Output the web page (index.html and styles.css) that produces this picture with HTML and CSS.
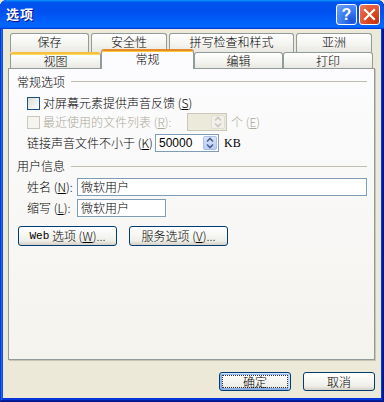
FILE: index.html
```html
<!DOCTYPE html>
<html lang="zh-CN">
<head>
<meta charset="utf-8">
<title>选项</title>
<link rel="stylesheet" href="styles.css">
</head>
<body>
<div class="window">
  <div class="titlebar">
    <span class="title">选项</span>
    <div class="tb-buttons">
      <span class="tb-btn help">?</span>
      <span class="tb-btn close">
        <svg width="13" height="13" viewBox="0 0 13 13"><path d="M2 2 L11 11 M11 2 L2 11" stroke="#fff" stroke-width="2.2" stroke-linecap="square"/></svg>
      </span>
    </div>
  </div>
  <div class="body">
    <div class="tabrow back">
      <div class="tab t-save">保存</div>
      <div class="tab t-sec">安全性</div>
      <div class="tab t-spell">拼写检查和样式</div>
      <div class="tab t-asia">亚洲</div>
    </div>
    <div class="tabrow front">
      <div class="tab hot t-view">视图</div>
      <div class="tab selected t-gen">常规</div>
      <div class="tab t-edit">编辑</div>
      <div class="tab t-print">打印</div>
    </div>
    <div class="panel">
      <div class="section"><span>常规选项</span><i class="rule"></i></div>
      <div class="row cb-row">
        <span class="checkbox"></span>
        <span>对屏幕元素提供声音反馈 (<u>S</u>)</span>
      </div>
      <div class="row cb-row2 disabled">
        <span class="checkbox"></span>
        <span class="recent-label">最近使用的文件列表 (<u>R</u>):</span>
        <span class="spinbox off">
          <span class="spinval"></span>
          <span class="spin">
            <svg width="12" height="14" viewBox="0 0 12 14"><path d="M3 5.5 L6 2.5 L9 5.5 M3 8.5 L6 11.5 L9 8.5" fill="none" stroke="#C9C7BA" stroke-width="1.6"/></svg>
          </span>
        </span>
        <span class="unit">个 (<u>E</u>)</span>
      </div>
      <div class="row size-row">
        <span class="size-label">链接声音文件不小于 (<u>K</u>)</span>
        <span class="spinbox">
          <span class="spinval">50000</span>
          <span class="spin on">
            <svg width="12" height="14" viewBox="0 0 12 14"><path d="M3 5.5 L6 2.5 L9 5.5 M3 8.5 L6 11.5 L9 8.5" fill="none" stroke="#4D6185" stroke-width="1.6"/></svg>
          </span>
        </span>
        <span class="kb">KB</span>
      </div>
      <div class="section s2"><span>用户信息</span><i class="rule"></i></div>
      <div class="row field-row">
        <span class="field-label">姓名 (<u>N</u>):</span>
        <span class="input wide">微软用户</span>
      </div>
      <div class="row field-row r2">
        <span class="field-label">缩写 (<u>L</u>):</span>
        <span class="input short">微软用户</span>
      </div>
      <div class="row btn-row">
        <span class="btn wbtn"><span class="mono">Web</span>&nbsp;选项 (<u>W</u>)...</span>
        <span class="btn wbtn">服务选项 (<u>V</u>)...</span>
      </div>
    </div>
    <div class="actions">
      <span class="btn act default"><span class="focus">确定</span></span>
      <span class="btn act">取消</span>
    </div>
  </div>
</div>
</body>
</html>
```
FILE: styles.css
```css
* { box-sizing: border-box; }
html, body { margin: 0; padding: 0; }
body {
  width: 384px;
  height: 402px;
  overflow: hidden;
  font-family: "Noto Sans CJK SC", "Liberation Sans", sans-serif;
  font-size: 12px;
  font-weight: 300;
  line-height: 14px;
  color: #000;
  background: #ECE9D8;
}
u { text-decoration: underline; text-underline-offset: 1px; }

.window {
  width: 384px;
  height: 402px;
  display: flex;
  flex-direction: column;
  background: #0831D9;
  border-radius: 7px 7px 0 0;
  box-shadow: inset -1px -1px #00138c, inset 1px 1px #0831d9, inset -2px -2px #001ea0, inset 2px 2px #166aee, inset -3px -3px #003bda, inset 3px 3px #0855dd;
}

.titlebar {
  height: 29px;
  flex: none;
  display: flex;
  align-items: center;
  padding: 0 4px 0 6px;
  border-radius: 7px 7px 0 0;
  background: linear-gradient(180deg, #0997ff, #0053ee 8%, #0050ee 40%, #06f 88%, #06f 93%, #005bff 95%, #003dd7 96%, #003dd7);
}
.title {
  flex: 1;
  color: #fff;
  font-weight: bold;
  font-size: 13px;
  letter-spacing: 1px;
  text-shadow: 1px 1px #0f1089;
  padding-bottom: 1px;
}
.tb-buttons { display: flex; gap: 2px; }
.tb-btn {
  width: 21px;
  height: 21px;
  border: 1px solid #fff;
  border-radius: 3px;
  display: flex;
  align-items: center;
  justify-content: center;
  color: #fff;
  font-family: "Liberation Sans", sans-serif;
  font-weight: bold;
  font-size: 16px;
}
.help {
  background: radial-gradient(circle at 80% 85%, #1b4fd8 0%, #3a7bf2 45%, #6da2fb 100%);
}
.close {
  background: radial-gradient(circle at 85% 85%, #c2350f 0%, #e0502a 50%, #ec7d5c 100%);
}

.body {
  flex: 1;
  margin: 0 3px 4px 3px;
  background: #ECE9D8;
  padding: 4px 6px 0 5px;
  display: flex;
  flex-direction: column;
}

.tabrow { display: flex; padding-left: 2px; }
.tabrow.back { height: 19px; gap: 2px; }
.tabrow.front { height: 16px; align-items: flex-end; }

.tab {
  height: 100%;
  border: 1px solid #919B9C;
  border-bottom: none;
  border-radius: 3px 3px 0 0;
  background: linear-gradient(#FFFFFF, #F3F3EF 60%, #E9E8E2);
  display: flex;
  align-items: center;
  justify-content: center;
}
.back .tab { height: 19px; padding-bottom: 2px; }
.front .tab { height: 16px; }
.tab.hot { border-top: 2px solid #F7C13D; box-shadow: inset 0 1px 0 #FFD866; }
.tab.selected {
  position: relative;
  z-index: 2;
  height: 20px;
  margin-bottom: -1px;
  background: #FCFCFE;
  border-top: 2px solid #E68B2C;
  box-shadow: inset 0 1px 0 #FFC83C;
  padding-bottom: 3px;
}

.t-save { width: 79px; }
.t-sec { width: 76px; }
.t-spell { width: 125px; }
.t-asia { width: 76px; }
.t-view { width: 91px; }
.t-gen { width: 93px; }
.t-edit { width: 89px; }
.t-print { width: 90px; }

.panel {
  position: relative;
  z-index: 1;
  height: 292px;
  width: 367px;
  flex: none;
  border: 1px solid #919B9C;
  box-shadow: 1px 1px 0 #C8C6B8;
  background: linear-gradient(#FCFCFE, #F4F3EE);
  padding: 0 6px 0 0;
  display: flex;
  flex-direction: column;
}

.section {
  height: 25px;
  display: flex;
  align-items: center;
  padding-left: 8px;
}
.section.s2 { height: 24px; }
.rule {
  flex: 1;
  height: 0;
  border-top: 1px solid #C0BDAD;
  margin-left: 6px;
  margin-right: 1px;
}

.row { display: flex; align-items: center; padding-left: 18px; }
.cb-row { height: 18px; }
.cb-row2 { height: 20px; }
.size-row { height: 22px; }

.checkbox {
  width: 13px;
  height: 13px;
  border: 1px solid #1C5180;
  background: linear-gradient(135deg, #DCDCD7, #FFFFFF);
  margin-right: 3px;
  flex: none;
}
.disabled { color: #ACA899; }
.disabled .checkbox { border-color: #CAC8BB; background: #F5F4EE; }

.recent-label { width: 144px; }

.spinbox {
  width: 64px;
  height: 18px;
  border: 1px solid #7F9DB9;
  background: #fff;
  display: flex;
  align-items: center;
  padding: 1px 1px 1px 3px;
}
.spinbox.off { width: 40px; border-color: #C9C7BA; background: #EBEADB; }
.spinval { flex: 1; font-family: "Liberation Sans", sans-serif; font-size: 12px; font-weight: 400; }
.spin {
  width: 14px;
  height: 14px;
  border-radius: 2px;
  display: flex;
  align-items: center;
  justify-content: center;
  background: #F1F0EA;
  border: 1px solid #E0DED3;
}
.spin.on {
  background: linear-gradient(#D9E5FD, #B6CBF8);
  border-color: #A8BEF0;
}
.unit { margin-left: 4px; }
.size-label { width: 128px; }
.kb { margin-left: 5px; font-family: "Liberation Serif", serif; font-weight: 400; }

.field-row { height: 18px; }
.field-row.r2 { margin-top: 3px; }
.field-label { width: 50px; }
.input {
  height: 18px;
  border: 1px solid #7F9DB9;
  background: #fff;
  display: flex;
  align-items: center;
  padding-left: 3px;
}
.input.wide { flex: 1; margin-right: 1px; }
.input.short { width: 89px; }

.btn {
  height: 19px;
  border: 1px solid #003C74;
  border-radius: 3px;
  background: linear-gradient(#FFFFFF, #F0F0EA 75%, #D6D0C5);
  display: flex;
  align-items: center;
  justify-content: center;
}
.mono { font-family: "Liberation Mono", monospace; font-size: 11px; font-weight: 400; }
.btn-row { margin-top: 9px; padding-left: 9px; gap: 12px; }
.wbtn { width: 99px; height: 20px; }

.actions {
  display: flex;
  justify-content: flex-end;
  gap: 12px;
  margin-top: 12px;
}
.act { width: 72px; height: 19px; }
.default {
  box-shadow: inset -1px 1px #CEE7FF, inset 1px 2px #98B8EA, inset -2px 2px #BCD4F6, inset 1px -1px #89ADE4, inset 2px -2px #89ADE4;
  padding: 2px;
}
.focus {
  width: 100%;
  height: 100%;
  border: 1px dotted #333;
  display: flex;
  align-items: center;
  justify-content: center;
}
```
